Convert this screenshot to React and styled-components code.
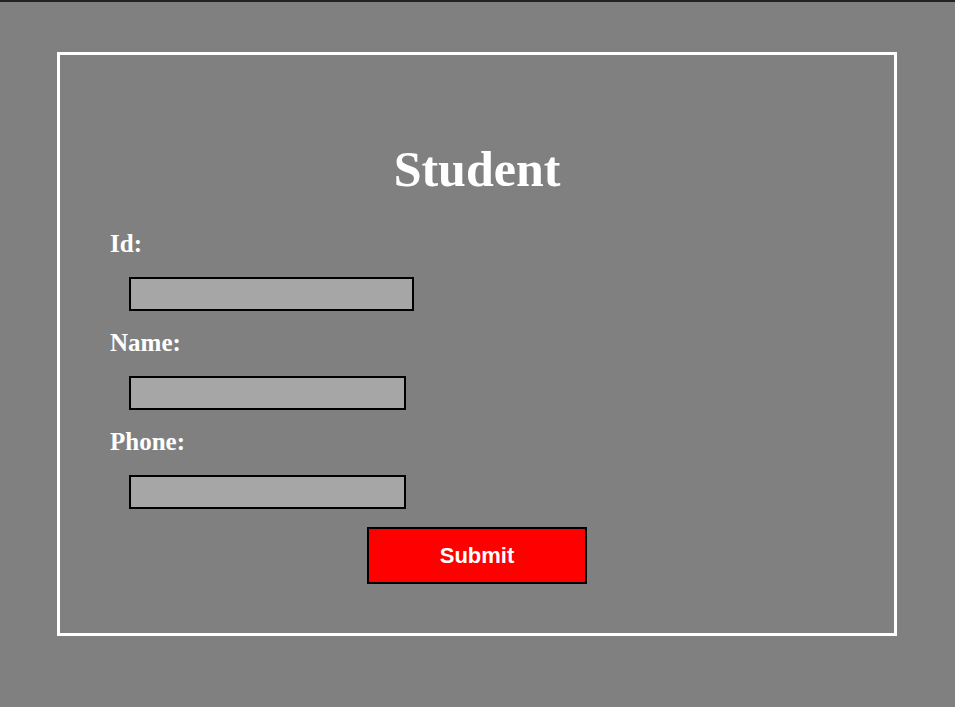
import styled, { createGlobalStyle } from "styled-components";

const GlobalStyle = createGlobalStyle`
  html, body {
    margin: 0;
    padding: 0;
    background: #808080;
  }
  body {
    border-top: 2px solid #222222;
    min-height: 705px;
    font-family: "Liberation Serif", "Times New Roman", serif;
  }
`;

const Panel = styled.div`
  width: 840px;
  box-sizing: border-box;
  margin: 50px 0 0 57px;
  border: 3px solid #ffffff;
  padding: 85px 50px 49px;
  display: flex;
  flex-direction: column;
`;

const Title = styled.h1`
  margin: 0 0 32px;
  text-align: center;
  color: #ffffff;
  font-size: 50px;
  font-weight: bold;
  line-height: normal;
`;

const Label = styled.label`
  color: #ffffff;
  font-size: 25px;
  font-weight: bold;
  line-height: normal;
  margin-bottom: 19px;
`;

const Input = styled.input`
  box-sizing: border-box;
  width: ${(p) => p.$width}px;
  height: 34px;
  margin: 0 0 18px 19px;
  border: 2px solid #000000;
  background: #a6a6a6;
  outline: none;
  padding: 0 4px;
`;

const Button = styled.button`
  align-self: center;
  box-sizing: border-box;
  width: 220px;
  height: 57px;
  background: #ff0000;
  border: 2px solid #000000;
  color: #ffffff;
  font-family: "Liberation Sans", Arial, sans-serif;
  font-size: 22px;
  font-weight: bold;
  cursor: pointer;
`;

const fields = [
  { label: "Id:", width: 285 },
  { label: "Name:", width: 277 },
  { label: "Phone:", width: 277 },
];

export default function App() {
  return (
    <>
      <GlobalStyle />
      <Panel>
        <Title>Student</Title>
        {fields.map((f) => (
          <>
            <Label key={f.label + "l"}>{f.label}</Label>
            <Input key={f.label + "i"} $width={f.width} />
          </>
        ))}
        <Button>Submit</Button>
      </Panel>
    </>
  );
}
